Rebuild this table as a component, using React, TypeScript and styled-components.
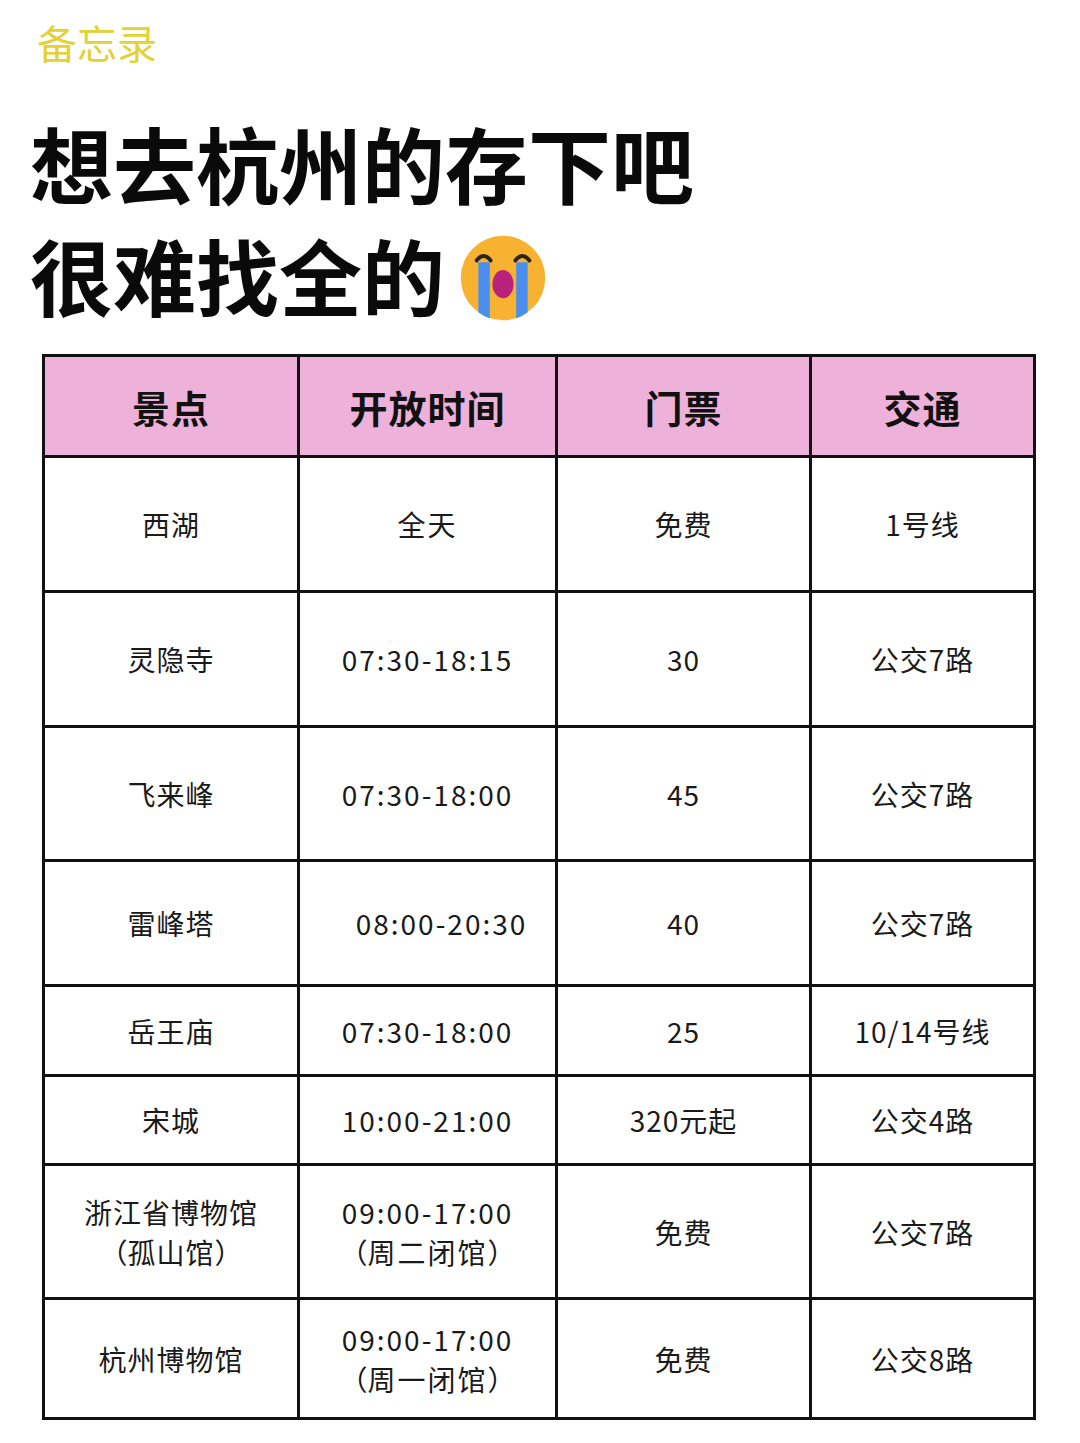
import styled, { createGlobalStyle } from "styled-components";

const GlobalStyle = createGlobalStyle`
  body {
    margin: 0;
    background: #ffffff;
    font-family: "Noto Sans CJK SC", "Noto Sans", sans-serif;
    color: #111111;
    text-spacing-trim: space-all;
  }
`;

const Page = styled.div`
  width: 1080px;
  min-height: 1443px;
  background: #ffffff;
  padding-top: 22px;
  box-sizing: border-box;
`;

const MemoLabel = styled.div`
  margin-left: 37px;
  font-size: 40px;
  line-height: 40px;
  color: #e2d233;
  font-weight: 400;
`;

const Title = styled.h1`
  margin: 44px 0 0 30px;
  font-size: 83px;
  line-height: 112px;
  font-weight: 700;
  color: #0a0a0a;
`;

const TitleLine = styled.div`
  display: flex;
  align-items: center;
  gap: 14px;
`;

const Emoji = styled.svg`
  width: 88px;
  height: 88px;
  flex-shrink: 0;
  margin-top: 8px;
`;

const Table = styled.table`
  margin: 24px 0 0 42px;
  width: 991px;
  border-collapse: collapse;
  table-layout: fixed;
  border: 3px solid #111;
`;

const HeadCell = styled.th`
  background: #eeb1da;
  border: 3px solid #111;
  height: 96px;
  font-size: 38px;
  letter-spacing: 1px;
  font-weight: 700;
  text-align: center;
  color: #111;
`;

const Cell = styled.td<{ $shift?: number; $num?: boolean }>`
  border: 3px solid #111;
  text-align: center;
  font-size: 28px;
  line-height: 40px;
  letter-spacing: ${({ $num }) => ($num ? 2 : 1)}px;
  color: #1a1a1a;
  padding: 0 0 0 ${({ $shift }) => $shift ?? 0}px;
`;

const Paren = styled.span`
  display: inline-block;
  width: 1em;
  text-align: center;
  letter-spacing: 0;
  font-family: "Noto Sans CJK TC", "Noto Sans CJK SC", sans-serif;
`;

const Row = styled.tr<{ $h: number }>`
  height: ${({ $h }) => $h}px;
`;

type Spot = {
  name: string[];
  time: string[];
  ticket: string;
  traffic: string;
  h: number;
  shift?: number;
};

const spots: Spot[] = [
  { name: ["西湖"], time: ["全天"], ticket: "免费", traffic: "1号线", h: 135 },
  { name: ["灵隐寺"], time: ["07:30-18:15"], ticket: "30", traffic: "公交7路", h: 135 },
  { name: ["飞来峰"], time: ["07:30-18:00"], ticket: "45", traffic: "公交7路", h: 134 },
  { name: ["雷峰塔"], time: ["08:00-20:30"], ticket: "40", traffic: "公交7路", h: 125, shift: 28 },
  { name: ["岳王庙"], time: ["07:30-18:00"], ticket: "25", traffic: "10/14号线", h: 90 },
  { name: ["宋城"], time: ["10:00-21:00"], ticket: "320元起", traffic: "公交4路", h: 89 },
  {
    name: ["浙江省博物馆", "（孤山馆）"],
    time: ["09:00-17:00", "（周二闭馆）"],
    ticket: "免费",
    traffic: "公交7路",
    h: 134,
  },
  {
    name: ["杭州博物馆"],
    time: ["09:00-17:00", "（周一闭馆）"],
    ticket: "免费",
    traffic: "公交8路",
    h: 120,
  },
];

// full-width brackets get their own box so they keep the centred look
const renderLine = (line: string) =>
  line.split(/([（）])/).map((part, i) =>
    part === "（" || part === "）" ? <Paren key={i}>{part}</Paren> : part
  );

const Lines = ({ lines }: { lines: string[] }) => (
  <>
    {lines.map((l, i) => (
      <div key={i}>{renderLine(l)}</div>
    ))}
  </>
);

const CryingFace = () => (
  <Emoji viewBox="0 0 100 100">
    <circle cx="50" cy="50" r="48" fill="#f7b232" />
    <path d="M20 30 Q28 20 36 30" stroke="#2d2418" strokeWidth="4.5" fill="none" strokeLinecap="round" />
    <path d="M64 30 Q72 20 80 30" stroke="#2d2418" strokeWidth="4.5" fill="none" strokeLinecap="round" />
    <path d="M22 32 L35 32 L35 96 Q27 93 22 89 Z" fill="#4a8ef0" />
    <path d="M65 32 L78 32 L78 89 Q73 93 65 96 Z" fill="#4a8ef0" />
    <ellipse cx="50" cy="57" rx="12" ry="16" fill="#b8217c" />
  </Emoji>
);

export default function App() {
  return (
    <Page>
      <GlobalStyle />
      <MemoLabel>备忘录</MemoLabel>
      <Title>
        <TitleLine>想去杭州的存下吧</TitleLine>
        <TitleLine>
          很难找全的
          <CryingFace />
        </TitleLine>
      </Title>
      <Table>
        <colgroup>
          <col style={{ width: 255 }} />
          <col style={{ width: 258 }} />
          <col style={{ width: 254 }} />
          <col style={{ width: 224 }} />
        </colgroup>
        <thead>
          <tr>
            <HeadCell>景点</HeadCell>
            <HeadCell>开放时间</HeadCell>
            <HeadCell>门票</HeadCell>
            <HeadCell>交通</HeadCell>
          </tr>
        </thead>
        <tbody>
          {spots.map((s) => (
            <Row key={s.name[0]} $h={s.h}>
              <Cell>
                <Lines lines={s.name} />
              </Cell>
              <Cell $shift={s.shift} $num>
                <Lines lines={s.time} />
              </Cell>
              <Cell>{s.ticket}</Cell>
              <Cell>{s.traffic}</Cell>
            </Row>
          ))}
        </tbody>
      </Table>
    </Page>
  );
}
